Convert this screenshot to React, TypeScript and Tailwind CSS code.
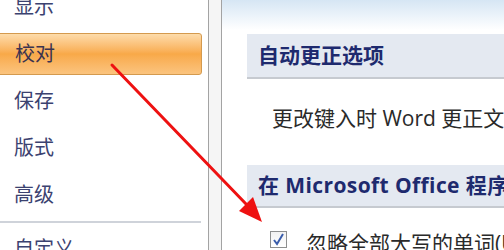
import React from "react";

const font = { fontFamily: '"Open Sans", "Noto Sans CJK SC", sans-serif' };

function NavItem({ label, active }: { label: string; active?: boolean }) {
  if (active) {
    return (
      <div className="shrink-0 h-[42px] w-[205px] -ml-[3px] flex items-center pl-[17px] rounded-[3px] border border-[#d49a4e] bg-gradient-to-b from-[#fddcaa] via-[#f8a948] to-[#fbc47e] text-[20px] text-[#3a3350]">
        {label}
      </div>
    );
  }
  return (
    <div className="shrink-0 h-[42px] flex items-center pl-[14px] text-[20px] text-[#3b4270]">{label}</div>
  );
}

export default function App() {
  return (
    <div className="relative w-[504px] h-[250px] overflow-hidden bg-white flex" style={font}>
      {/* left nav */}
      <div className="w-[208px] shrink-0 bg-white flex flex-col gap-[5px] -mt-[14px]">
        <NavItem label="显示" />
        <NavItem label="校对" active />
        <NavItem label="保存" />
        <NavItem label="版式" />
        <NavItem label="高级" />
        <div className="shrink-0 h-[2px] w-[201px] bg-[#cfd3da]" />
        <NavItem label="自定义" />
      </div>
      {/* divider */}
      <div className="w-[14px] shrink-0 border-l border-r border-[#a3a3a3] bg-[#f5f5f5]" />
      {/* right panel */}
      <div className="flex-1 min-w-0 flex flex-col bg-gradient-to-b from-[#d6e6f4] via-white to-white bg-no-repeat bg-[length:100%_60px]">
        <div className="shrink-0 ml-[25px] mt-[34px] h-[45px] bg-[#e4e9f1] border-b-2 border-[#c6cad0] flex items-center pl-[11px] text-[21px] font-bold text-[#1e2a6e] whitespace-nowrap">
          自动更正选项
        </div>
        <div className="shrink-0 ml-[50px] mt-[27px] h-[26px] flex items-center text-[21px] text-[#2a2a2a] whitespace-nowrap">
          更改键入时 Word 更正文本和设置其格式的方式
        </div>
        <div className="shrink-0 ml-[25px] mt-[33px] h-[43px] bg-[#e4e9f1] border-b-2 border-[#c6cad0] flex items-center pl-[11px] text-[21px] font-bold tracking-[0.4px] text-[#1e2a6e] whitespace-nowrap">
          在 Microsoft Office 程序中更正拼写时
        </div>
        <div className="shrink-0 ml-[48px] mt-[23px] flex items-start gap-[19px] whitespace-nowrap">
          <div className="shrink-0 w-[17px] h-[17px] border border-[#8e8f8f] bg-gradient-to-b from-[#f2f2f2] to-white flex items-center justify-center">
            <svg width="13" height="13" viewBox="0 0 13 13">
              <path d="M2 7 L5 11 L11 1" fill="none" stroke="#3a5dab" strokeWidth="2" />
            </svg>
          </div>
          <div className="text-[21px] text-[#2a2a2a] leading-[26px] mt-[-1px]">忽略全部大写的单词(U)</div>
        </div>
      </div>
      {/* red arrow */}
      <svg className="absolute inset-0 pointer-events-none" width="504" height="250" viewBox="0 0 504 250">
        <line x1="112" y1="65" x2="247" y2="205" stroke="#ee1111" strokeWidth="3" strokeLinecap="round" />
        <polygon points="262,222 239,211 253,197" fill="#ee1111" />
      </svg>
    </div>
  );
}
